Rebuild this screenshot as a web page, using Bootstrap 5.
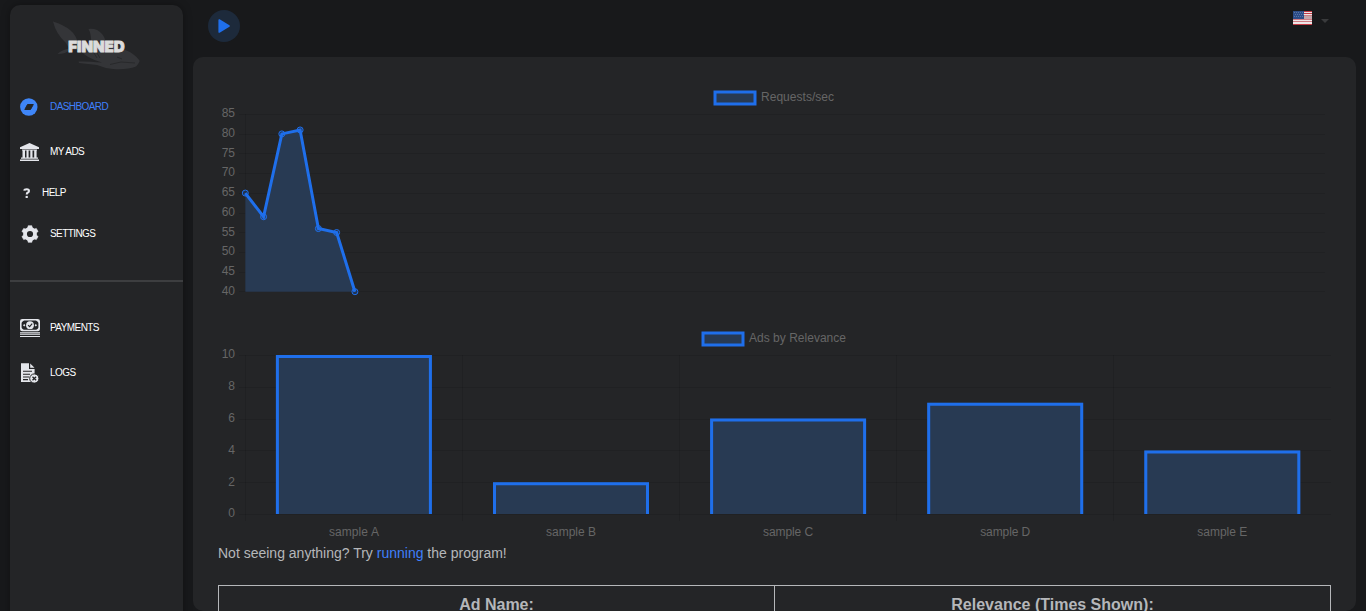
<!DOCTYPE html>
<html lang="en" data-bs-theme="dark">
<head>
<meta charset="utf-8">
<meta name="viewport" content="width=device-width, initial-scale=1">
<title>Finned</title>
<link href="https://cdn.jsdelivr.net/npm/bootstrap@5.3.0/dist/css/bootstrap.min.css" rel="stylesheet">
<style>
body{background:#18191b;color:#b5b7ba;font-family:"Liberation Sans",Arial,sans-serif;font-size:14px;height:100vh;overflow:hidden}
.sidebar{width:173px;margin:5px 10px 0;height:620px;background:#242527;border-radius:10px;box-shadow:0 0 8px rgba(0,0,0,.35)}
.brand{height:79px;display:block}
.side-link{height:41px;padding:0 10px;font-size:10px;letter-spacing:-.58px;color:#fff}
.side-link.tall{height:45px}
.side-link.current{color:#3f80fb}
.side-link svg{flex:none;margin-right:10px;color:#e4e6eb}
.side-link.current svg{color:#3f86f8}
.divider{height:2px;background:#3d3e40;margin:26px 0 23px}
.topbar{height:57px;padding:10px 26px 0 15px}
.play{width:32px;height:32px;background:#1d2a3b}
.content{width:1163px;height:554px;background:#242527;border-radius:10px;padding:25px 25px 0;overflow:hidden}
svg text{font-family:"Liberation Sans",Arial,sans-serif;font-size:12px;fill:#666}
.note{line-height:20px;margin:0 0 22px}
.note a{color:#3f80fb}
.ads{border:1px solid #b5b7ba;font-size:16px;font-weight:700;height:60px}
.ads>div{padding-top:7px;line-height:24px}
.ads>div:first-child{width:555px}
.ads>div+div{border-left:1px solid #b5b7ba}
svg .wordmark{font-family:Inter,sans-serif;font-weight:900;font-size:14.5px;fill:#dcdcdc;stroke:#dcdcdc;stroke-width:.8}
</style>
</head>
<body>
<div class="d-flex">
<aside class="sidebar flex-shrink-0">
<svg class="brand" width="173" height="79" viewBox="10 5 173 79">
<path fill="#343538" d="M53 21.500Q64 25 70 30Q76 35 77.500 42L91 43Q91.500 34 88.500 29Q97 28 102 34Q105 37 105.500 43Q117 45 124 49.500Q134 53 139.500 60.500Q140 62 136 66.500Q127 70 113 69Q104 68 97 65L79 63L78.500 61.500Q86 61 102 62.500Q86 58 80 50L70 49.500Q66 54 57.500 54Q61 50 69 48.500L66 43Q56 34 53 21.500Z"/>
<path d="M110 64.500L121 62L135 63M117 57L122 59M94 53L97 58M97 53L100 58" stroke="#28292b" fill="none"/>
<text class="wordmark" x="68.300" y="51.500" textLength="56.300" lengthAdjust="spacingAndGlyphs">FINNED</text>
</svg>
<nav>
<a href="#" class="side-link tall current d-flex align-items-center text-decoration-none"><svg width="20" height="20" viewBox="0 0 20 20"><circle cx="8.800" cy="10" r="8.700" fill="currentColor"/><path d="M7.500 7.500H13.300L10.500 12.500H4.800Z" fill="#242527" stroke="#242527" stroke-linejoin="round"/></svg>DASHBOARD</a>
<a href="#" class="side-link tall d-flex align-items-center text-decoration-none"><svg width="20" height="20" viewBox="0 0 20 20" fill="currentColor"><path d="M9.500 1L19 5.200V7H0V5.200ZM2 7.500H17V8.600H2ZM2.500 8.500H5V15.500H2.500ZM6.500 8.500H8.600V15.500H6.500ZM10.300 8.500H12.500V15.500H10.300ZM14.200 8.500H16.600V15.500H14.200ZM1 15.600H18V16.700H1ZM0 17.400H19V19H0Z"/></svg>MY ADS</a>
<a href="#" class="side-link d-flex align-items-center text-decoration-none" style="margin-top:-2px"><svg width="13" height="14" viewBox="0 0 13 14" style="margin-right:9px"><path d="M4.200 4.600Q4.400 3.200 6.800 3.200Q9 3.200 9 5Q9 6 7.900 6.500Q6.700 7 6.700 8.500" fill="none" stroke="currentColor" stroke-width="2"/><path d="M5.600 9.900H7.800V12H5.600Z" fill="currentColor"/></svg>HELP</a>
<a href="#" class="side-link d-flex align-items-center text-decoration-none"><svg width="20" height="20" viewBox="0 0 20 20"><circle cx="10" cy="10" r="5" fill="none" stroke="currentColor" stroke-width="3.800"/><path d="M8.200 1.700H11.800L12.500 5H7.500ZM8.200 18.300H11.800L12.500 15H7.500ZM1.900 7.500L3.700 4.400L6.800 5.500L4.400 9.300ZM18.100 7.500L16.300 4.400L13.200 5.500L15.600 9.300ZM1.900 12.500L3.700 15.600L6.800 14.500L4.400 10.700ZM18.100 12.500L16.300 15.600L13.200 14.500L15.600 10.700Z" fill="currentColor" stroke="currentColor" stroke-width=".6" stroke-linejoin="round"/></svg>SETTINGS</a>
<div class="divider"></div>
<a href="#" class="side-link tall d-flex align-items-center text-decoration-none"><svg width="20" height="20" viewBox="0 0 20 20"><rect x=".8" y="1.800" width="18.400" height="10.700" rx="1.500" fill="none" stroke="currentColor" stroke-width="1.600"/><circle cx="10" cy="7.200" r="3.900" fill="currentColor"/><path d="M8 7.200L9.600 8.700L12.200 5.700" fill="none" stroke="#242527" stroke-width="1.100"/><path d="M1 2H4.300L1 5ZM19 2H15.700L19 5ZM1 12.500H4.300L1 9.500ZM19 12.500H15.700L19 9.500ZM3 7.200L4.200 6L5.400 7.200L4.200 8.400ZM14.600 7.200L15.800 6L17 7.200L15.800 8.400ZM0 14.300H20V15.400H0ZM0 16.300H20V17.100H0ZM0 18H20V19H0Z" fill="currentColor"/></svg>PAYMENTS</a>
<a href="#" class="side-link tall d-flex align-items-center text-decoration-none"><svg width="20" height="20" viewBox="0 0 20 20"><path d="M1 .2H9V6H14.600V19H1Z" fill="currentColor"/><path d="M10.200 .4L14.500 4.800H10.200Z" fill="currentColor"/><path d="M3 8.300H12M3 11.200H10M3 14H9M3 16.600H8" stroke="#242527" stroke-width="1.100"/><circle cx="14.300" cy="15.500" r="4.600" fill="currentColor" stroke="#242527"/><path d="M12.500 13.700L16.100 17.300M16.100 13.700L12.500 17.300" stroke="#242527" stroke-width="1.300"/></svg>LOGS</a>
</nav>
</aside>
<main class="flex-shrink-0">
<header class="topbar d-flex justify-content-between">
<button class="play btn p-0 border-0 rounded-circle d-flex align-items-center justify-content-center" aria-label="Run"><svg width="14" height="16" viewBox="0 0 14 16"><path d="M2.200 2L12 8L2.200 14Z" fill="#1f6feb" stroke="#1f6feb" stroke-width="1.600" stroke-linejoin="round"/></svg></button>
<a href="#" aria-label="Language"><svg class="d-block" width="37" height="20" viewBox="1293 10 37 20" shape-rendering="crispEdges"><path fill="#eee5e7" d="M1293 11H1312V25H1293Z"/><path fill="#c33a44" d="M1293 11H1312V12H1293ZM1293 13H1312V14H1293ZM1293 24H1312V25H1293Z"/><path fill="#cf7c84" d="M1293 15H1312V16H1293ZM1293 19H1312V20H1293ZM1293 21H1312V22H1293Z"/><path fill="#c5a4a8" d="M1293 16H1312V19H1293Z"/><path fill="#2c4c87" d="M1293 11H1304V19H1293Z"/><path d="M1294 12.500H1304M1295 14.500H1304M1294 16.500H1304" stroke="#5a74a3" stroke-dasharray="1 1"/><path d="M1321 19H1329L1325 23Z" fill="#393a3c" shape-rendering="auto"/></svg></a>
</header>
<section class="content">
<svg class="d-block" id="requests" width="1113" height="241" viewBox="218 82 1113 241"></svg>
<svg class="d-block" id="relevance" width="1113" height="220" viewBox="218 323 1113 220"></svg>
<p class="note">Not seeing anything? Try <a href="#" class="text-decoration-none">running</a> the program!</p>
<div class="ads d-flex text-center"><div>Ad Name:</div><div class="flex-grow-1">Relevance (Times Shown):</div></div>
</section>
</main>
</div>
<script>
const grid='stroke="rgba(0,0,0,.1)" stroke-width="1"', blue='#1f6feb', fill='#283a53';
const legend=(x,y,tx,t,w)=>`<rect x="${x}" y="${y}" width="40" height="12" fill="${fill}" stroke="${blue}" stroke-width="3"/><text x="${tx}" y="${y+9}" textLength="${w}">${t}</text>`;
let s=legend(715,92,761,'Requests/sec',73);
for(let i=0;i<10;i++){
  const y=114+i*19.72;
  s+=`<path d="M239 ${Math.round(y)+.5}H1325" ${grid}/><text x="235" y="${y+3.2}" text-anchor="end">${85-i*5}</text>`;
}
s+=`<path d="M245.500 114V292" ${grid}/>`;
const pts=[65,59,80,81,56,55,40].map((v,i)=>[245.3+i*18.27,291.7-(v-40)*3.945]);
const line=pts.map(p=>p.join(' ')).join('L');
s+=`<path d="M${line}L245.300 291.700Z" fill="${fill}"/><path d="M${line}" fill="none" stroke="${blue}" stroke-width="3"/>`;
pts.forEach(p=>s+=`<circle cx="${p[0]}" cy="${p[1]}" r="3" fill="${blue}" fill-opacity=".2" stroke="${blue}"/>`);
document.getElementById('requests').innerHTML=s;
s=legend(703,333,749,'Ads by Relevance',97);
for(let i=0;i<6;i++){
  const y=354.8+i*31.85, x=245.5+i*217;
  s+=`<path d="M239 ${Math.round(y)+.5}H1331${i<5?`M${x} 355V521`:''}" ${grid}/><text x="235" y="${y+3.4}" text-anchor="end">${10-i*2}</text>`;
}
[10,2,6,7,4].forEach((v,i)=>{
  const c=353.9+i*217.1, top=514-v*15.9;
  s+=`<rect x="${c-78}" y="${top}" width="156" height="${514-top}" fill="${fill}"/><path d="M${c-76.5} 514V${top+1.5}H${c+76.5}V514" fill="none" stroke="${blue}" stroke-width="3"/><text x="${c}" y="536" text-anchor="middle" textLength="50">sample ${'ABCDE'[i]}</text>`;
});
document.getElementById('relevance').innerHTML=s;
</script>
<script src="https://cdn.jsdelivr.net/npm/bootstrap@5.3.0/dist/js/bootstrap.bundle.min.js"></script>
</body>
</html>
